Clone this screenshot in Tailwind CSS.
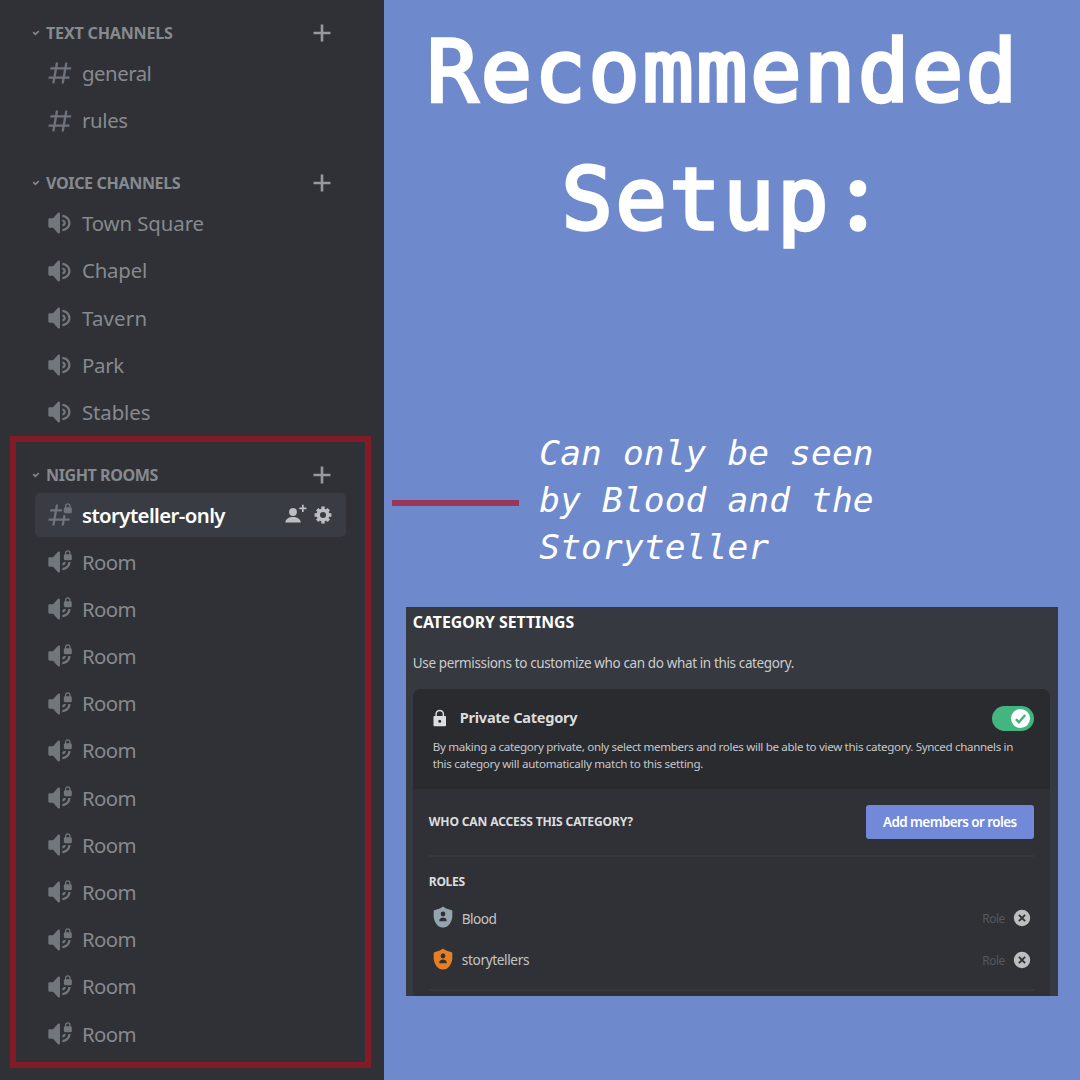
<!DOCTYPE html>
<html lang="en">
<head>
<meta charset="utf-8">
<title>Recommended Setup</title>
<script src="https://cdn.jsdelivr.net/npm/@tailwindcss/browser@4"></script>
</head>
<body class="w-[1080px] h-[1080px] overflow-hidden bg-[#6e89cc] font-['Noto_Sans',sans-serif]">
<svg class="hidden">
  <symbol id="hash" viewBox="0 0 24 24"><path fill-rule="evenodd" d="M5.88657 21C5.57547 21 5.3399 20.7189 5.39427 20.4126L6.00001 17H2.59511C2.28449 17 2.04905 16.7198 2.10259 16.4138L2.27759 15.4138C2.31946 15.1746 2.52722 15 2.77011 15H6.35001L7.41001 9H4.00511C3.69449 9 3.45905 8.71977 3.51259 8.41381L3.68759 7.41381C3.72946 7.17456 3.93722 7 4.18011 7H7.76001L8.39677 3.41262C8.43914 3.17391 8.64664 3 8.88907 3H9.87344C10.1845 3 10.4201 3.28107 10.3657 3.58738L9.76001 7H15.76L16.3968 3.41262C16.4391 3.17391 16.6466 3 16.8891 3H17.8734C18.1845 3 18.4201 3.28107 18.3657 3.58738L17.76 7H21.1649C21.4755 7 21.711 7.28023 21.6574 7.58619L21.4824 8.58619C21.4406 8.82544 21.2328 9 20.9899 9H17.41L16.35 15H19.7549C20.0655 15 20.301 15.2802 20.2474 15.5862L20.0724 16.5862C20.0306 16.8254 19.8228 17 19.5799 17H16L15.3632 20.5874C15.3209 20.8261 15.1134 21 14.8709 21H13.8866C13.5755 21 13.3399 20.7189 13.3943 20.4126L14 17H8.00001L7.36325 20.5874C7.32088 20.8261 7.11337 21 6.87094 21H5.88657ZM9.41001 9L8.35001 15H14.35L15.41 9H9.41001Z"/></symbol>
  <symbol id="hash-lock" viewBox="0 0 24 24"><path d="M14 8C14 7.44772 13.5523 7 13 7H9.76001L10.3657 3.58738C10.4201 3.28107 10.1845 3 9.87344 3H8.88907C8.64664 3 8.43914 3.17391 8.39677 3.41262L7.76001 7H4.18011C3.93722 7 3.72946 7.17456 3.68759 7.41381L3.51259 8.41381C3.45905 8.71977 3.69449 9 4.00511 9H7.41001L6.35001 15H2.77011C2.52722 15 2.31946 15.1746 2.27759 15.4138L2.10259 16.4138C2.04905 16.7198 2.28449 17 2.59511 17H6.00001L5.39427 20.4126C5.3399 20.7189 5.57547 21 5.88657 21H6.87094C7.11337 21 7.32088 20.8261 7.36325 20.5874L8.00001 17H14L13.3943 20.4126C13.3399 20.7189 13.5755 21 13.8866 21H14.8709C15.1134 21 15.3209 20.8261 15.3632 20.5874L16 17H19.5799C19.8228 17 20.0306 16.8254 20.0724 16.5862L20.2474 15.5862C20.301 15.2802 20.0655 15 19.7549 15H16.35L16.6758 13.1558C16.7823 12.5529 16.3188 12 15.7066 12C15.2286 12 14.8199 12.3429 14.7368 12.8136L14.3504 15H8.35045L9.41045 9H13C13.5523 9 14 8.55228 14 8Z"/><path transform="translate(-.3 .7)" fill-rule="evenodd" d="M21.4 4.6V3.8C21.4 2.3 20.5 1.3 19 1.3C17.5 1.3 16.6 2.3 16.6 3.8V4.6C15.8 4.7 15.6 5.1 15.6 5.8V8.8C15.6 9.500 15.9 9.800 16.5 9.800H21.5C22.1 9.800 22.4 9.500 22.4 8.800V5.8C22.4 5.1 22.1 4.7 21.4 4.6ZM20.3 4.6H17.7V3.9C17.7 3 18.2 2.4 19 2.4C19.8 2.4 20.3 3 20.3 3.9V4.6Z"/></symbol>
  <symbol id="speaker" viewBox="0 0 24 24"><path d="M11.383 3.07904C11.009 2.92504 10.579 3.01004 10.293 3.29604L6 8.00204H3C2.45 8.00204 2 8.45304 2 9.00204V15.002C2 15.552 2.45 16.002 3 16.002H6L10.293 20.71C10.579 20.996 11.009 21.082 11.383 20.927C11.757 20.772 12 20.407 12 20.002V4.00204C12 3.59904 11.757 3.23204 11.383 3.07904ZM14 5.00195V7.00195C16.757 7.00195 19 9.24595 19 12.002C19 14.759 16.757 17.002 14 17.002V19.002C17.86 19.002 21 15.863 21 12.002C21 8.14295 17.86 5.00195 14 5.00195ZM14 9.00195C15.654 9.00195 17 10.349 17 12.002C17 13.657 15.654 15.002 14 15.002V13.002C14.551 13.002 15 12.553 15 12.002C15 11.451 14.551 11.002 14 11.002V9.00195Z"/></symbol>
  <symbol id="speaker-lock" viewBox="0 0 24 24"><path d="M11.383 3.07904C11.009 2.92504 10.579 3.01004 10.293 3.29604L6 8.00204H3C2.45 8.00204 2 8.45304 2 9.00204V15.002C2 15.552 2.45 16.002 3 16.002H6L10.293 20.71C10.579 20.996 11.009 21.082 11.383 20.927C11.757 20.772 12 20.407 12 20.002V4.00204C12 3.59904 11.757 3.23204 11.383 3.07904ZM15 12V12.002C15 12.553 14.551 13.002 14 13.002V15.002C15.654 15.002 17 13.657 17 12.002V12H15ZM19 12V12.002C19 14.759 16.757 17.002 14 17.002V19.002C17.86 19.002 21 15.863 21 12.002V12H19Z"/><path transform="translate(-.3 .7)" fill-rule="evenodd" d="M21.4 4.6V3.8C21.4 2.3 20.5 1.3 19 1.3C17.5 1.3 16.6 2.3 16.6 3.8V4.6C15.8 4.7 15.6 5.1 15.6 5.8V8.8C15.6 9.500 15.9 9.800 16.5 9.800H21.5C22.1 9.800 22.4 9.500 22.4 8.800V5.8C22.4 5.1 22.1 4.7 21.4 4.6ZM20.3 4.6H17.7V3.9C17.7 3 18.2 2.4 19 2.4C19.8 2.4 20.3 3 20.3 3.9V4.6Z"/></symbol>
  <symbol id="plus" viewBox="0 0 18 18"><path d="M7.7 .5h2.6v7.2h7.2v2.6h-7.2v7.2H7.7v-7.2H.5V7.7h7.2z"/></symbol>
  <symbol id="chevron" viewBox="0 0 8 6"><path d="M1.2 2 3.3 4.400 6.8 1.2" fill="none" stroke="currentColor" stroke-width="1.6"/></symbol>
  <symbol id="shield" viewBox="0 0 20 22"><path fill-rule="evenodd" d="M10 .6C8 2.4 4.600 3.600 1.300 4.300C.9 4.400 .7 4.700 .7 5.100V10.500C.9 14.500 3.200 18.800 6 20.500C7.300 21.300 8.700 21.500 10 21.500C11.300 21.500 12.700 21.300 14 20.500C16.800 18.800 19.100 14.500 19.300 10.500V5.100C19.300 4.700 19.100 4.400 18.700 4.300C15.400 3.600 12 2.400 10 .6ZM10 5.600A2.400 2.400 0 1 1 10 10.400A2.400 2.400 0 1 1 10 5.600ZM6.400 15.200V13.800C6.400 12.300 8.500 11.400 10 11.400C11.500 11.400 13.600 12.300 13.600 13.800V15.200Z"/></symbol>
  <symbol id="remove" viewBox="0 0 18 18"><circle cx="9" cy="9" r="8.2"/><path d="M5.900 5.900l6.200 6.200M12.100 5.900l-6.200 6.200" stroke="#2f3136" stroke-width="1.900"/></symbol>
</svg>

<div class="flex h-full">
  <nav class="relative w-[383.5px] h-full shrink-0 bg-[#2f3136] text-[#868a8f] pt-[17.1px] text-[20.4px] whitespace-nowrap">
    <section class="mb-[22.8px]">
      <header class="flex items-center h-[32.8px] pl-8 text-[16.1px] font-bold">
        <svg class="w-2 h-1.5 mr-[6px]"><use href="#chevron"/></svg><span class="tracking-[-0.2px] grow">TEXT CHANNELS</span>
        <svg class="w-[18px] h-[18px] mr-[52.5px] fill-[#96999d]"><use href="#plus"/></svg>
      </header>
      <div class="flex items-center h-[47.2px] pl-[46.3px]"><svg class="size-7 fill-[#6f747c] mr-[7.7px]"><use href="#hash"/></svg><span class="tracking-[-0.5px]">general</span></div>
      <div class="flex items-center h-[47.2px] pl-[46.3px]"><svg class="size-7 fill-[#6f747c] mr-[7.7px]"><use href="#hash"/></svg><span class="tracking-[-0.35px]">rules</span></div>
    </section>

    <section class="mb-[22.7px]">
      <header class="flex items-center h-[32.8px] pl-8 text-[16.1px] font-bold">
        <svg class="w-2 h-1.5 mr-[6px]"><use href="#chevron"/></svg><span class="tracking-[-0.38px] grow">VOICE CHANNELS</span>
        <svg class="w-[18px] h-[18px] mr-[52.5px] fill-[#96999d]"><use href="#plus"/></svg>
      </header>
      <div class="flex items-center h-[47.2px] pl-[45.700px]"><svg class="size-7 fill-[#72767d] mr-[8.300px]"><use href="#speaker"/></svg><span class="tracking-[-0.1px]">Town Square</span></div>
      <div class="flex items-center h-[47.2px] pl-[45.700px]"><svg class="size-7 fill-[#72767d] mr-[8.300px]"><use href="#speaker"/></svg><span class="tracking-[-0.2px]">Chapel</span></div>
      <div class="flex items-center h-[47.2px] pl-[45.700px]"><svg class="size-7 fill-[#72767d] mr-[8.300px]"><use href="#speaker"/></svg><span class="tracking-[0.2px]">Tavern</span></div>
      <div class="flex items-center h-[47.2px] pl-[45.700px]"><svg class="size-7 fill-[#72767d] mr-[8.300px]"><use href="#speaker"/></svg><span class="tracking-[-0.3px]">Park</span></div>
      <div class="flex items-center h-[47.2px] pl-[45.700px]"><svg class="size-7 fill-[#72767d] mr-[8.300px]"><use href="#speaker"/></svg><span class="tracking-[-0.1px]">Stables</span></div>
    </section>

    <section id="night">
      <header class="flex items-center h-[32.8px] pl-8 text-[16.1px] font-bold">
        <svg class="w-2 h-1.5 mr-[6px]"><use href="#chevron"/></svg><span class="tracking-[-0.45px] grow">NIGHT ROOMS</span>
        <svg class="w-[18px] h-[18px] mr-[52.5px] fill-[#96999d]"><use href="#plus"/></svg>
      </header>
      <div class="flex items-center h-[44.4px] my-[1.4px] ml-[35px] mr-[38px] pl-[11.3px] rounded-[5px] bg-[#393c43]">
        <svg class="size-7 fill-[#6f747c] mr-[7.7px]"><use href="#hash-lock"/></svg>
        <span class="grow font-semibold text-white tracking-[-0.6px]">storyteller-only</span>
        <svg class="w-[22px] h-[20px] mr-[7.5px] -mt-[2px] fill-[#bdbec1]" viewBox="0 0 22 20"><circle cx="8" cy="8" r="3.900"/><path d="M.4 18.600C.4 14.900 4 13 8 13s7.700 1.900 7.700 5.600z"/><path d="M17 .8h1.700v2.800h2.700v1.700h-2.700V8H17V5.300h-2.700V3.600H17z"/></svg>
        <svg class="size-[18px] mr-[13.5px] fill-[#bdbec1]" viewBox="0 0 18 18"><path fill-rule="evenodd" d="M9 2.500A6.500 6.500 0 1 1 9 15.500A6.500 6.500 0 1 1 9 2.500ZM9 6A3 3 0 1 0 9 12A3 3 0 1 0 9 6Z"/><g stroke="#bdbec1" stroke-width="3.400"><path d="M9 .6v3.400M9 14v3.400M.6 9h3.400M14 9h3.400M3.200 3.200l2.200 2.200M12.600 12.600l2.200 2.200M3.200 14.800l2.200-2.200M12.600 5.400l2.200-2.200"/></g></svg>
      </div>
    </section>
    <template id="room">
      <div class="flex items-center h-[47.2px] pl-[45.700px]"><svg class="size-7 fill-[#72767d] mr-[8.300px]"><use href="#speaker-lock"/></svg><span class="tracking-[-0.6px]">Room</span></div>
    </template>
    <div class="absolute left-[10px] top-[436.300px] w-[361.300px] h-[631.400px] border-[6px] border-[#831b27]"></div>
  </nav>

  <main class="relative grow flex flex-col">
    <h1 class="h-[256px] mt-[8px] -ml-[17px] text-center font-['DejaVu_Sans_Mono',monospace] text-[85px] leading-[127.700px] tracking-[2.730px] text-white [-webkit-text-stroke:3.4px_white]">Recommended<br>Setup<span class="inline-block w-[53.900px] leading-none text-center font-['Noto_Sans'] font-semibold tracking-normal">:</span></h1>

    <div class="flex mt-[166px] ml-[8.800px]">
      <div class="w-[127px] h-[6px] mt-[69.500px] bg-[#99375a]"></div>
      <p class="ml-[20px] font-['DejaVu_Sans_Mono',monospace] italic text-[34.500px] leading-[47px] tracking-[0.130px] text-white whitespace-nowrap">Can only be seen<br>by Blood and the<br>Storyteller</p>
    </div>

    <section class="absolute left-[22.300px] top-[607px] w-[652px] h-[389px] overflow-hidden bg-[#36393f] whitespace-nowrap text-[#dcddde]">
      <h2 class="h-[30px] pl-[7px] text-[15.800px] leading-[30px] font-bold text-white">CATEGORY SETTINGS</h2>
      <p class="h-[52px] pl-[7px] pt-[11px] text-[13.500px] leading-[30px] tracking-[-0.375px] text-[#cbccce]">Use permissions to customize who can do what in this category.</p>
      <div class="mx-[7px] w-[637px] h-[320px] rounded-t-[8px] overflow-hidden bg-[#2f3136]">
        <div class="h-[100px] bg-[#292b2f] pl-5 pr-4">
          <div class="flex items-center h-[58px]">
            <svg class="w-[13.500px] h-[18px] fill-[#dcddde]" viewBox="0 0 14 18"><path fill-rule="evenodd" d="M11.500 7V4.900C11.500 2.200 9.700 .5 7 .5S2.500 2.200 2.500 4.900V7H1.400C.8 7 .5 7.400 .5 7.900V16.600C.5 17.200 .8 17.500 1.400 17.500H12.600C13.200 17.500 13.500 17.200 13.500 16.600V7.900C13.500 7.400 13.200 7 12.600 7ZM10 7H4V4.900C4 3.100 5.200 2 7 2S10 3.100 10 4.900ZM7 10.800A1.600 1.600 0 1 1 7 14A1.600 1.600 0 1 1 7 10.800Z"/></svg>
            <span class="grow ml-[13.500px] text-[14.600px] font-bold tracking-[-0.300px]">Private Category</span>
            <span class="flex justify-end items-center w-[41.500px] h-[25px] pr-[3.500px] rounded-full bg-[#43b581]"><svg class="size-[19px]" viewBox="0 0 19 19"><circle cx="9.500" cy="9.500" r="9.500" fill="#fff"/><path d="M4.900 10.200 7.900 13.200 14.200 6" fill="none" stroke="#43b581" stroke-width="2.400"/></svg></span>
          </div>
          <p class="-mt-[8px] text-[11.600px] leading-[16.600px] text-[#c6c7c9]"><span class="tracking-[-0.340px]">By making a category private, only select members and roles will be able to view this category. Synced channels in</span><br><span class="tracking-[-0.290px]">this category will automatically match to this setting.</span></p>
        </div>
        <div class="px-4">
          <div class="flex items-center justify-between h-[68px] border-b-2 border-[#35383d]">
            <span class="text-[12.100px] font-bold tracking-[-0.170px]">WHO CAN ACCESS THIS CATEGORY?</span>
            <span class="flex items-center justify-center w-[168px] h-[34px] rounded-[3px] bg-[#7289da] text-white font-semibold text-[13.400px] tracking-[-0.540px]">Add members or roles</span>
          </div>
          <div class="h-[41px] pt-[10px] text-[12.100px] leading-[30px] font-bold tracking-[-0.350px]">ROLES</div>
          <div class="flex items-center h-[42px] pl-[4.500px]">
            <svg class="w-5 h-[22px] -mt-1 fill-[#95a5b0]"><use href="#shield"/></svg>
            <span class="grow ml-[8.500px] text-[13.700px] tracking-[-0.600px] text-[#c3c4c6]">Blood</span>
            <span class="text-[11.800px] tracking-[-0.400px] text-[#56595e]">Role</span>
            <svg class="size-[18px] ml-[8px] mr-[3px] -mt-[2px] fill-[#bdbebf]"><use href="#remove"/></svg>
          </div>
          <div class="flex items-center h-[41.500px] pl-[4.500px]">
            <svg class="w-5 h-[22px] -mt-1 fill-[#e67e22]"><use href="#shield"/></svg>
            <span class="grow ml-[8.500px] text-[13.700px] tracking-[-0.400px] text-[#c3c4c6]">storytellers</span>
            <span class="text-[11.800px] tracking-[-0.400px] text-[#56595e]">Role</span>
            <svg class="size-[18px] ml-[8px] mr-[3px] -mt-[2px] fill-[#bdbebf]"><use href="#remove"/></svg>
          </div>
          <div class="mt-[7.500px] h-[2px] bg-[#35383d]"></div>
        </div>
      </div>
    </section>
  </main>
</div>
<script>
  const night = document.getElementById('night');
  const room = document.getElementById('room');
  for (let i = 0; i < 11; i++) night.append(room.content.cloneNode(true));
</script>
</body>
</html>
